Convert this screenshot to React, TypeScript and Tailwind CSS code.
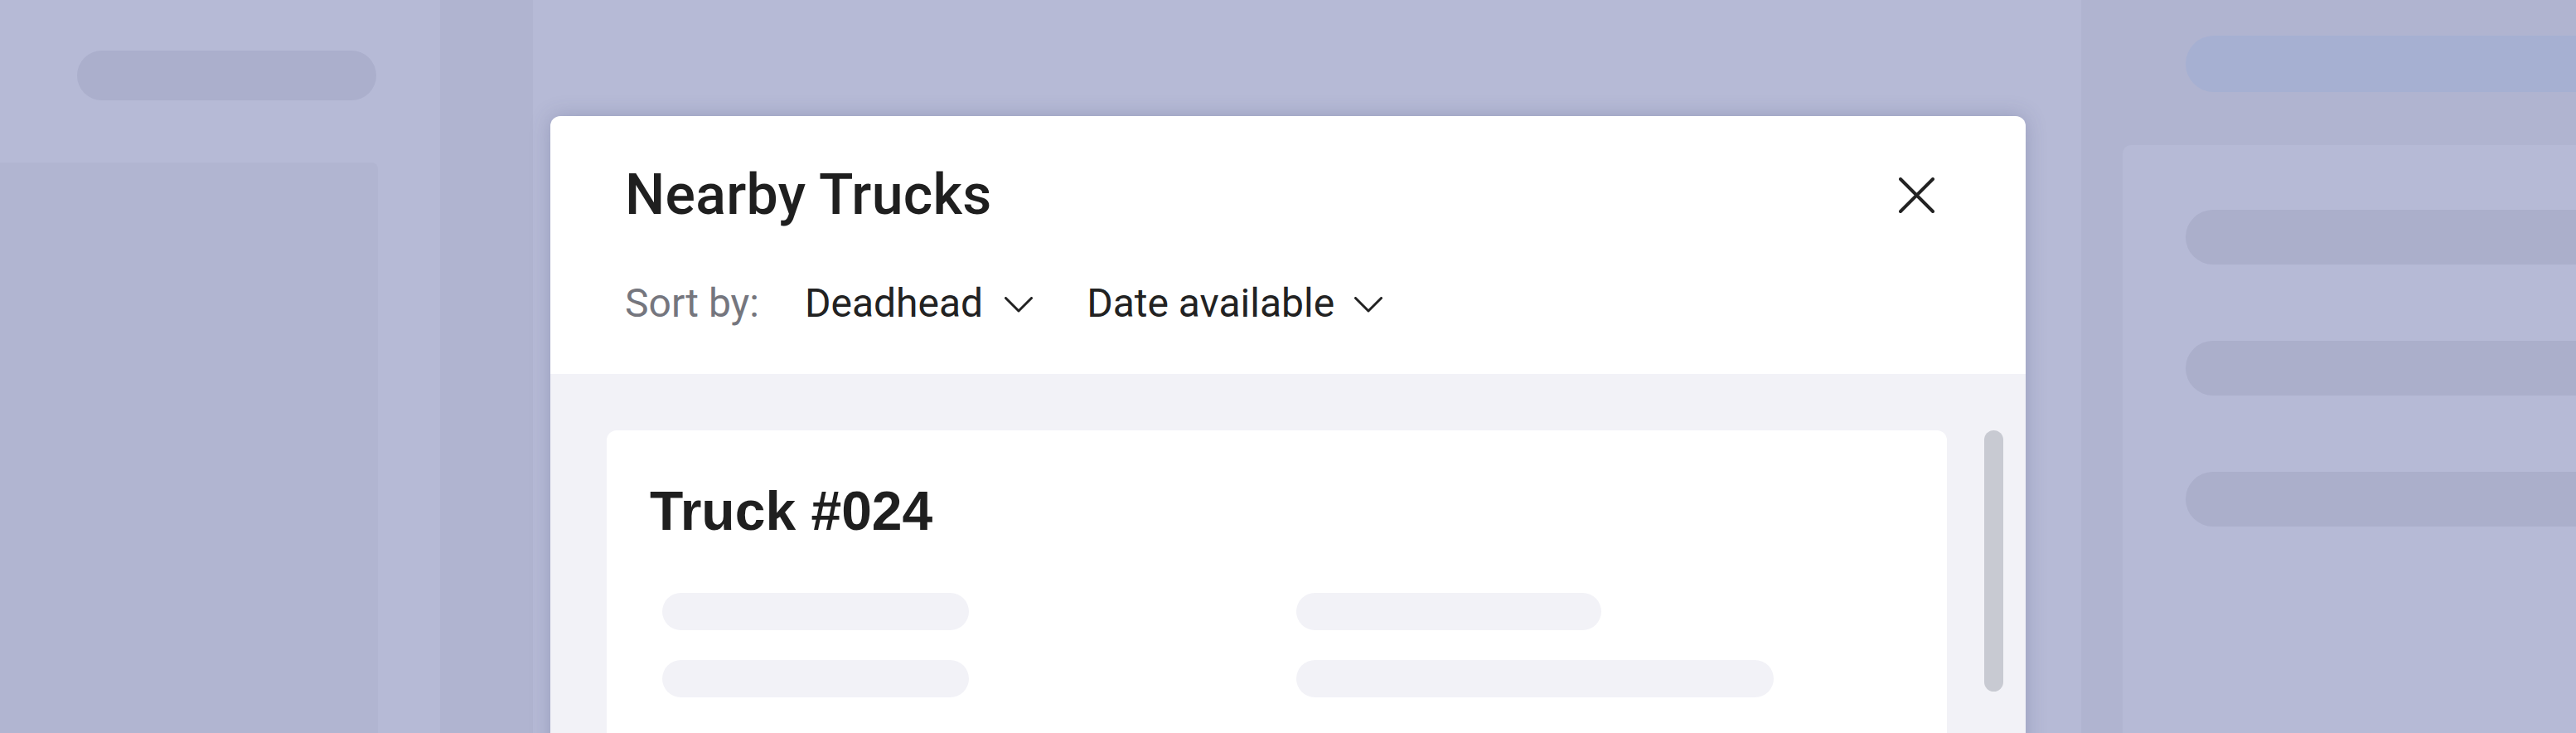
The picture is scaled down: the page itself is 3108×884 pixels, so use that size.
import React from "react";

function Chevron() {
  return (
    <svg width="34" height="19" viewBox="0 0 34 19" fill="none" className="block">
      <path d="M1.5 1.5 L17 17 L32.5 1.5" stroke="#222222" strokeWidth="3" strokeLinecap="round" strokeLinejoin="round" />
    </svg>
  );
}

function CloseIcon() {
  return (
    <svg width="43" height="43" viewBox="0 0 43 43" fill="none" className="block">
      <path d="M2 2 L41 41 M41 2 L2 41" stroke="#222222" strokeWidth="4" strokeLinecap="round" />
    </svg>
  );
}

export default function App() {
  return (
    <div
      className="relative flex h-[884px] w-[3108px] overflow-hidden bg-[#b6bad6]"
      style={{ fontFamily: "Roboto, 'Noto Sans', sans-serif" }}
    >
      {/* left sidebar */}
      <div className="flex w-[531px] shrink-0 flex-col bg-[#b6bad6]">
        <div className="h-[196px] shrink-0 pl-[93px] pt-[61px]">
          <div className="h-[60px] w-[361px] rounded-full bg-[#abafcc]" />
        </div>
        <div className="w-[456px] flex-1 rounded-tr-[8px] bg-[#b1b5d1]" />
      </div>
      {/* strip */}
      <div className="w-[112px] shrink-0 bg-[#b0b4d0]" />
      {/* main */}
      <div className="flex-1 bg-[#b6bad6]" />
      {/* right panel */}
      <div className="flex w-[597px] shrink-0 flex-col bg-[#b0b4d0]">
        <div className="h-[175px] shrink-0 pl-[126px] pt-[43px]">
          <div className="h-[68px] w-full rounded-l-full bg-[#a6b0d2]" />
        </div>
        <div className="flex flex-1">
          <div className="w-[50px] shrink-0" />
          <div className="flex flex-1 flex-col gap-[92px] rounded-tl-[10px] bg-[#b6bad6] pl-[76px] pt-[78px]">
            <div className="h-[66px] rounded-l-full bg-[#abafcb]" />
            <div className="h-[66px] rounded-l-full bg-[#abafcb]" />
            <div className="h-[66px] rounded-l-full bg-[#abafcb]" />
          </div>
        </div>
      </div>

      {/* modal */}
      <div className="absolute left-[664px] top-[140px] flex h-[800px] w-[1780px] flex-col overflow-hidden rounded-t-[12px] bg-white shadow-[0_0_24px_rgba(60,66,110,0.25)]">
        <div className="flex shrink-0 flex-col px-[90px] pt-[55px] pb-[57px]">
          <div className="flex items-center justify-between">
            <div className="text-[68px] font-medium leading-[80px] tracking-[0.3px] text-[#1f1f1f]">Nearby Trucks</div>
            <div className="mr-[20px]">
              <CloseIcon />
            </div>
          </div>
          <div className="mt-[63px] flex items-center text-[48px] leading-[56px]">
            <span className="text-[#75767e]">Sort by:</span>
            <span className="ml-[55px] text-[#222222]">Deadhead</span>
            <span className="ml-[26px] mt-[2px]">
              <Chevron />
            </span>
            <span className="ml-[65px] text-[#222222]">Date available</span>
            <span className="ml-[24px] mt-[2px]">
              <Chevron />
            </span>
          </div>
        </div>
        <div className="flex flex-1 bg-[#f2f2f7] pl-[68px] pt-[68px]">
          <div className="w-[1617px] shrink-0 rounded-t-[12px] bg-white pl-[52px] pt-[59px]">
            <div
              className="text-[66px] font-bold leading-[76px] text-[#1f1f1f]"
              style={{ fontFamily: "'Liberation Sans', Arial, sans-serif" }}
            >
              Truck #024
            </div>
            <div className="ml-[15px] mt-[61px] grid grid-cols-[765px_1fr] gap-y-[36px]">
              <div className="h-[45px] w-[370px] rounded-full bg-[#f2f2f7]" />
              <div className="h-[45px] w-[368px] rounded-full bg-[#f2f2f7]" />
              <div className="h-[45px] w-[370px] rounded-full bg-[#f2f2f7]" />
              <div className="h-[45px] w-[576px] rounded-full bg-[#f2f2f7]" />
            </div>
          </div>
          <div className="ml-[45px] h-[315px] w-[23px] shrink-0 rounded-full bg-[#c8cad2]" />
        </div>
      </div>
    </div>
  );
}
